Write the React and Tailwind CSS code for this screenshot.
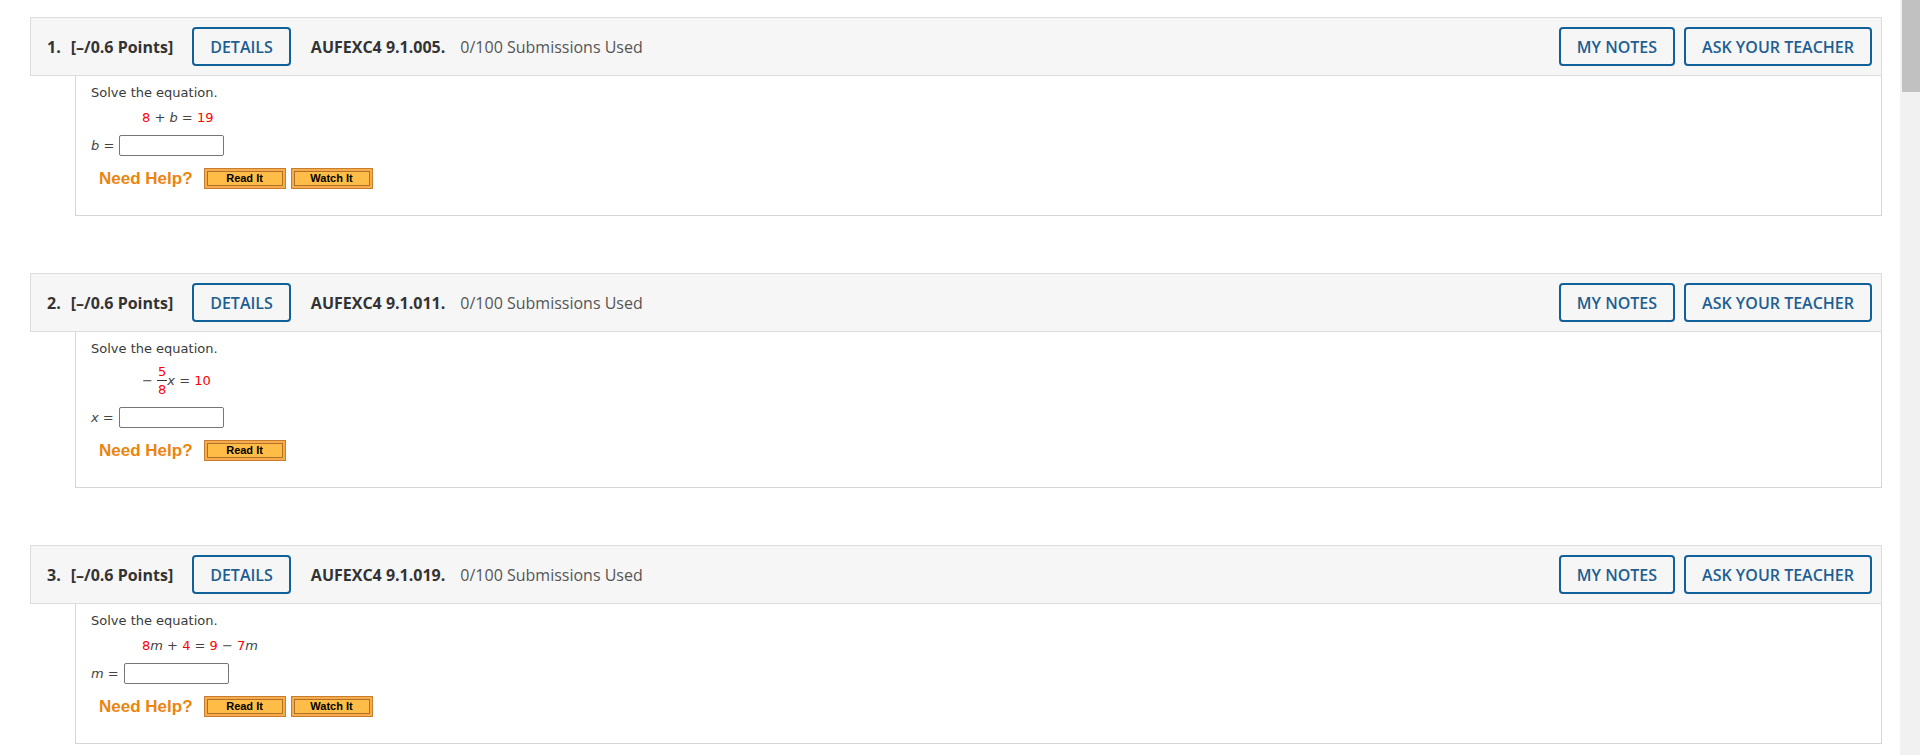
import React from 'react';

const questions = [
  { num: 1, code: 'AUFEXC4 9.1.005.', variable: 'b', kind: 'sum', watch: true },
  { num: 2, code: 'AUFEXC4 9.1.011.', variable: 'x', kind: 'fraction', watch: false },
  { num: 3, code: 'AUFEXC4 9.1.019.', variable: 'm', kind: 'linear', watch: true },
];

function OutlineButton({ children }) {
  return (
    <button className="h-[39px] px-[16px] border-2 border-[#10609a] rounded-[4px] text-[#1d5f93] text-[16px] font-semibold bg-transparent leading-none">
      {children}
    </button>
  );
}

function HelpButton({ children }) {
  return (
    <div className="w-[82px] h-[21px] border border-[#c47f2f] bg-[#f9ab4c] p-[2px] flex">
      <div className="flex-1 border border-[#ad712a] bg-[#ffbc47] flex items-center justify-center text-[11px] font-bold text-black leading-none" style={{ fontFamily: '"Liberation Sans", Arial, sans-serif' }}>
        {children}
      </div>
    </div>
  );
}

const Red = ({ children }) => <span className="text-[#ff0000]">{children}</span>;
const Var = ({ children }) => <span className="italic text-[#444]">{children}</span>;

function Equation({ kind }) {
  if (kind === 'sum') {
    return (
      <div className="ml-[51px] mt-[9px] leading-[16px] whitespace-pre text-[#444]">
        <Red>8</Red> + <Var>b</Var> = <Red>19</Red>
      </div>
    );
  }
  if (kind === 'fraction') {
    return (
      <div className="ml-[51px] mt-[7px] flex items-center whitespace-pre text-[#444]">
        <span>− </span>
        <span className="inline-flex flex-col items-center">
          <span className="leading-[15px] text-[#ff0000] px-[1px]">5</span>
          <span className="h-px w-full bg-[#333] my-px"></span>
          <span className="leading-[15px] text-[#ff0000] px-[1px]">8</span>
        </span>
        <Var>x</Var>
        <span> = </span>
        <Red>10</Red>
      </div>
    );
  }
  return (
    <div className="ml-[51px] mt-[9px] leading-[16px] whitespace-pre text-[#444]">
      <Red>8</Red><Var>m</Var> + <Red>4</Red> = <Red>9</Red> − <Red>7</Red><Var>m</Var>
    </div>
  );
}

function Question({ q }) {
  return (
    <div className="mb-[57px]">
      <div className="h-[59px] border border-[#dddddd] bg-[#f6f6f6] flex items-center pl-[16px] pr-[9px] text-[16px]" style={{ fontFamily: '"Open Sans", sans-serif' }}>
        <span className="font-bold text-[#333]">{q.num}.</span>
        <span className="font-bold text-[#333] ml-[10px]">[–/0.6 Points]</span>
        <div className="ml-[19px]">
          <OutlineButton>DETAILS</OutlineButton>
        </div>
        <span className="font-bold text-[#333] ml-[20px]">{q.code}</span>
        <span className="text-[#555] ml-[15px]">0/100 Submissions Used</span>
        <div className="flex-1" />
        <div className="flex gap-[9px]">
          <OutlineButton>MY NOTES</OutlineButton>
          <OutlineButton>ASK YOUR TEACHER</OutlineButton>
        </div>
      </div>
      <div className="ml-[45px] border-l border-r border-b border-[#d6d6d6] pl-[15px] pt-[9px] pb-[26px] text-[13px] leading-[16px] text-[#3a3a3a]" style={{ fontFamily: '"DejaVu Sans", Verdana, sans-serif' }}>
        <div className="leading-[16px]">Solve the equation.</div>
        <Equation kind={q.kind} />
        <div className={`flex items-center h-[21px] ${q.kind === 'fraction' ? 'mt-[10px]' : 'mt-[9px]'}`}>
          <span className="whitespace-pre text-[#444]"><Var>{q.variable}</Var> = </span>
          <input type="text" className="w-[105px] h-[21px] border border-[#767676] rounded-[2px] bg-white ml-[1px]" />
        </div>
        <div className="flex items-center h-[21px] mt-[12px] ml-[8px]">
          <span className="text-[17px] leading-[21px] font-bold text-[#ea8510] mr-[11px]" style={{ fontFamily: '"Liberation Sans", Arial, sans-serif' }}>Need Help?</span>
          <div className="flex gap-[5px]">
            <HelpButton>Read It</HelpButton>
            {q.watch && <HelpButton>Watch It</HelpButton>}
          </div>
        </div>
      </div>
    </div>
  );
}

export default function App() {
  return (
    <div className="h-[755px] w-full overflow-hidden flex bg-white">
      <div className="flex-1 pl-[30px] pr-[18px] pt-[17px]">
        {questions.map((q) => (
          <Question key={q.num} q={q} />
        ))}
      </div>
      <div className="w-[20px] bg-[#f1f1f1] pl-[2px]">
        <div className="h-[92px] bg-[#c1c1c1]" />
      </div>
    </div>
  );
}
